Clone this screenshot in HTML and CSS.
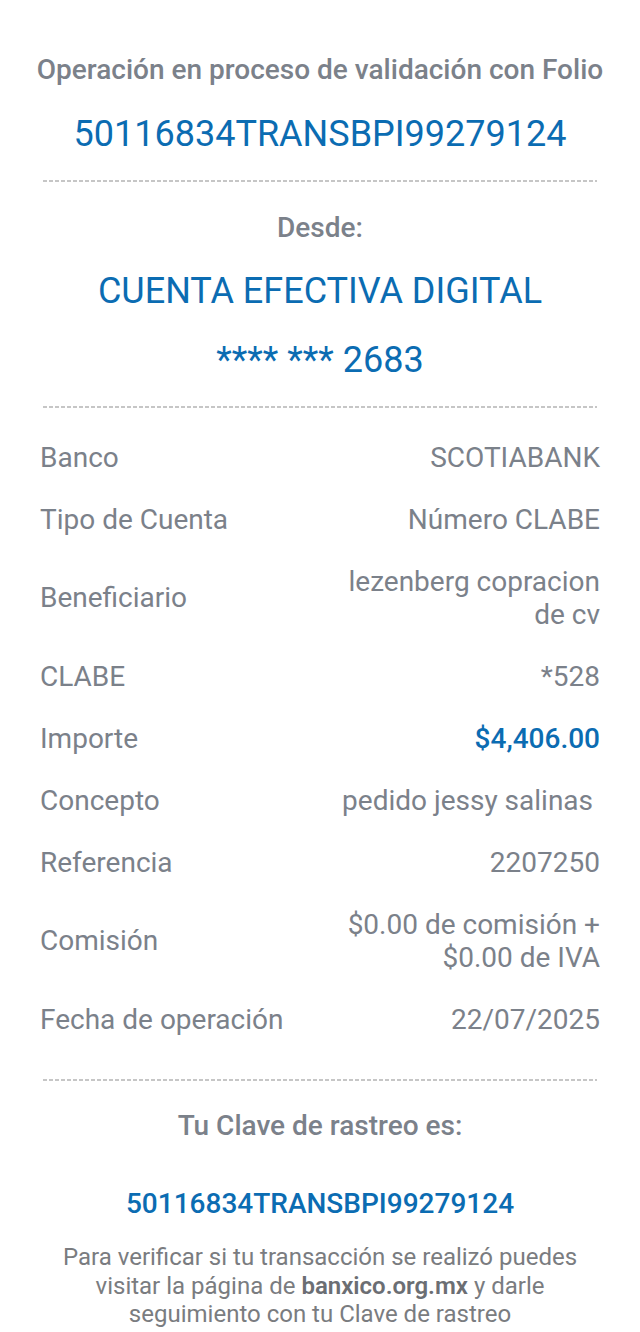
FILE: index.html
```html
<!DOCTYPE html>
<html>
<head>
    <meta charset="utf-8" />
    <title>Comprobante</title>
    <link rel="stylesheet" href="styles.css">
</head>
<body>
    <div class="receipt">
        <section class="head">
            <h2 class="title">Operación en proceso de validación con Folio</h2>
            <p class="folio">50116834TRANSBPI99279124</p>
        </section>

        <hr class="dash">

        <section class="origin">
            <h3 class="subtitle">Desde:</h3>
            <p class="account">CUENTA EFECTIVA DIGITAL</p>
            <p class="account number">**** *** 2683</p>
        </section>

        <hr class="dash">

        <ul class="details">
            <li><span class="label">Banco</span><span class="value">SCOTIABANK</span></li>
            <li><span class="label">Tipo de Cuenta</span><span class="value">Número CLABE</span></li>
            <li><span class="label">Beneficiario</span><span class="value">lezenberg copracion de cv</span></li>
            <li><span class="label">CLABE</span><span class="value">*528</span></li>
            <li><span class="label">Importe</span><span class="value amount">$4,406.00</span></li>
            <li><span class="label">Concepto</span><span class="value">pedido jessy salinas&nbsp;</span></li>
            <li><span class="label">Referencia</span><span class="value">2207250</span></li>
            <li><span class="label">Comisión</span><span class="value">$0.00 de comisión + $0.00 de IVA</span></li>
            <li><span class="label">Fecha de operación</span><span class="value">22/07/2025</span></li>
        </ul>

        <hr class="dash">

        <section class="tracking">
            <h3 class="subtitle">Tu Clave de rastreo es:</h3>
            <p class="tracking-key">50116834TRANSBPI99279124</p>
            <p class="note">Para verificar si tu transacción se realizó puedes visitar la página de <b>banxico.org.mx</b> y darle seguimiento con tu Clave de rastreo</p>
        </section>
    </div>
</body>
</html>
```

FILE: styles.css
```css
body {
    margin: 0;
    background: #fff;
    font-family: Roboto, "Noto Sans", sans-serif;
    color: #7b818a;
}

h2, h3, p {
    margin: 0;
}

.receipt {
    width: 640px;
    text-align: center;
}

/* Top block */
.head {
    padding-top: 54px;
}

.title {
    font-size: 28px;
    line-height: 32px;
    font-weight: 500;
}

.folio {
    margin-top: 28px;
    font-size: 36px;
    line-height: 40px;
    color: #0b6cb2;
}

/* dashed separators */
.dash {
    margin: 26px 43px 0;
    height: 2px;
    border: 0;
    background: repeating-linear-gradient(to right, #c6c6c6 0 4px, transparent 4px 6px);
}

.origin {
    padding-top: 30px;
}

.subtitle {
    font-size: 28px;
    line-height: 32px;
    font-weight: 500;
}

.account {
    margin-top: 27px;
    font-size: 36px;
    line-height: 40px;
    color: #0b6cb2;
}

.account.number {
    margin-top: 29px;
}

/* label / value rows */
.details {
    list-style: none;
    margin: 18px 0 0;
    padding: 0 40px;
    text-align: left;
}

.details li {
    display: grid;
    grid-template-columns: 1fr 1fr;
    align-items: center;
    padding: 14.5px 0;
    font-size: 28px;
    line-height: 33px;
}

.details + .dash {
    margin-top: 29px;
}

.value {
    text-align: right;
}

.amount {
    color: #0b6cb2;
    font-weight: 500;
}

/* bottom block */
.tracking {
    padding-top: 29px;
}

.tracking-key {
    margin-top: 45px;
    font-size: 28px;
    line-height: 34px;
    font-weight: 500;
    color: #0b6cb2;
}

.note {
    margin: 22px auto 0;
    width: 580px;
    font-size: 24px;
    line-height: 28.5px;
    color: #7a7c80;
}

.note b {
    font-weight: 600;
    color: #6b6e73;
}
```
